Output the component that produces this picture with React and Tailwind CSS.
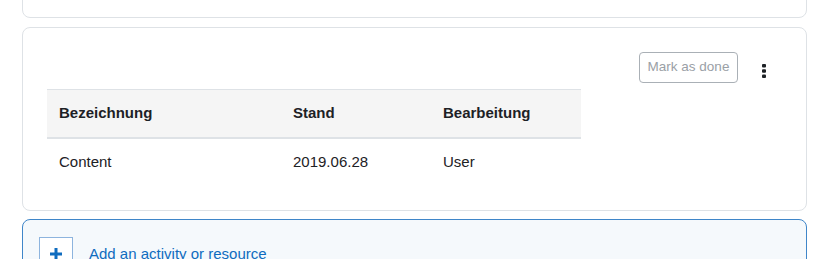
import React from "react";

function Kebab() {
  return (
    <svg width="4" height="14" viewBox="0 0 4 14" className="text-[#1d2125]">
      <rect x="0" y="0" width="4" height="3.5" rx="1" fill="currentColor" />
      <rect x="0" y="5.25" width="4" height="3.5" rx="1" fill="currentColor" />
      <rect x="0" y="10.5" width="4" height="3.5" rx="1" fill="currentColor" />
    </svg>
  );
}

function App() {
  const rows = [["Content", "2019.06.28", "User"]];

  return (
    <div className="h-[259px] bg-white pl-[22px] pr-[14px] font-['Liberation_Sans',Arial,sans-serif] text-[15px] leading-[22.5px] text-[#1d2125] overflow-hidden">
      <div className="-mt-[30px] h-[48px] rounded-lg border border-[#dee2e6] bg-white" />

      <div className="mt-[9px] rounded-lg border border-[#dee2e6] bg-white px-[24px] pt-[24px] pb-[25px]">
        <div className="flex items-center justify-end">
          <button
            type="button"
            className="h-[31px] w-[99px] rounded-[4px] border border-[#aab0b6] bg-white text-[13.5px] text-[#9aa0a6]"
          >
            Mark as done
          </button>
          <div className="ml-[8px] flex w-[36px] justify-center pt-[6px]">
            <Kebab />
          </div>
        </div>

        <table className="mt-[6px] w-[534px] border-collapse text-left">
          <thead>
            <tr className="border-t border-b-2 border-[#dee2e6] bg-[#f5f5f5]">
              <th className="w-[234px] px-3 py-3 font-bold">Bezeichnung</th>
              <th className="w-[150px] px-3 py-3 font-bold">Stand</th>
              <th className="w-[150px] px-3 py-3 font-bold">Bearbeitung</th>
            </tr>
          </thead>
          <tbody>
            {rows.map((r) => (
              <tr key={r[0]}>
                {r.map((c) => (
                  <td key={c} className="px-3 py-3 font-normal">
                    {c}
                  </td>
                ))}
              </tr>
            ))}
          </tbody>
        </table>
      </div>

      <div className="mt-[8px] flex items-center rounded-lg border border-[#3f86c9] bg-[#f5f9fc] px-[16px] pt-[17px] pb-[17px]">
        <div className="flex h-[34px] w-[34px] items-center justify-center border border-[#8db4de] bg-white">
          <svg width="12" height="12" viewBox="0 0 12 12">
            <rect x="4.5" y="0" width="3" height="12" fill="#0f6cbf" />
            <rect x="0" y="4.5" width="12" height="3" fill="#0f6cbf" />
          </svg>
        </div>
        <span className="ml-[16px] text-[#0f6cbf]">Add an activity or resource</span>
      </div>
    </div>
  );
}

export default App;
